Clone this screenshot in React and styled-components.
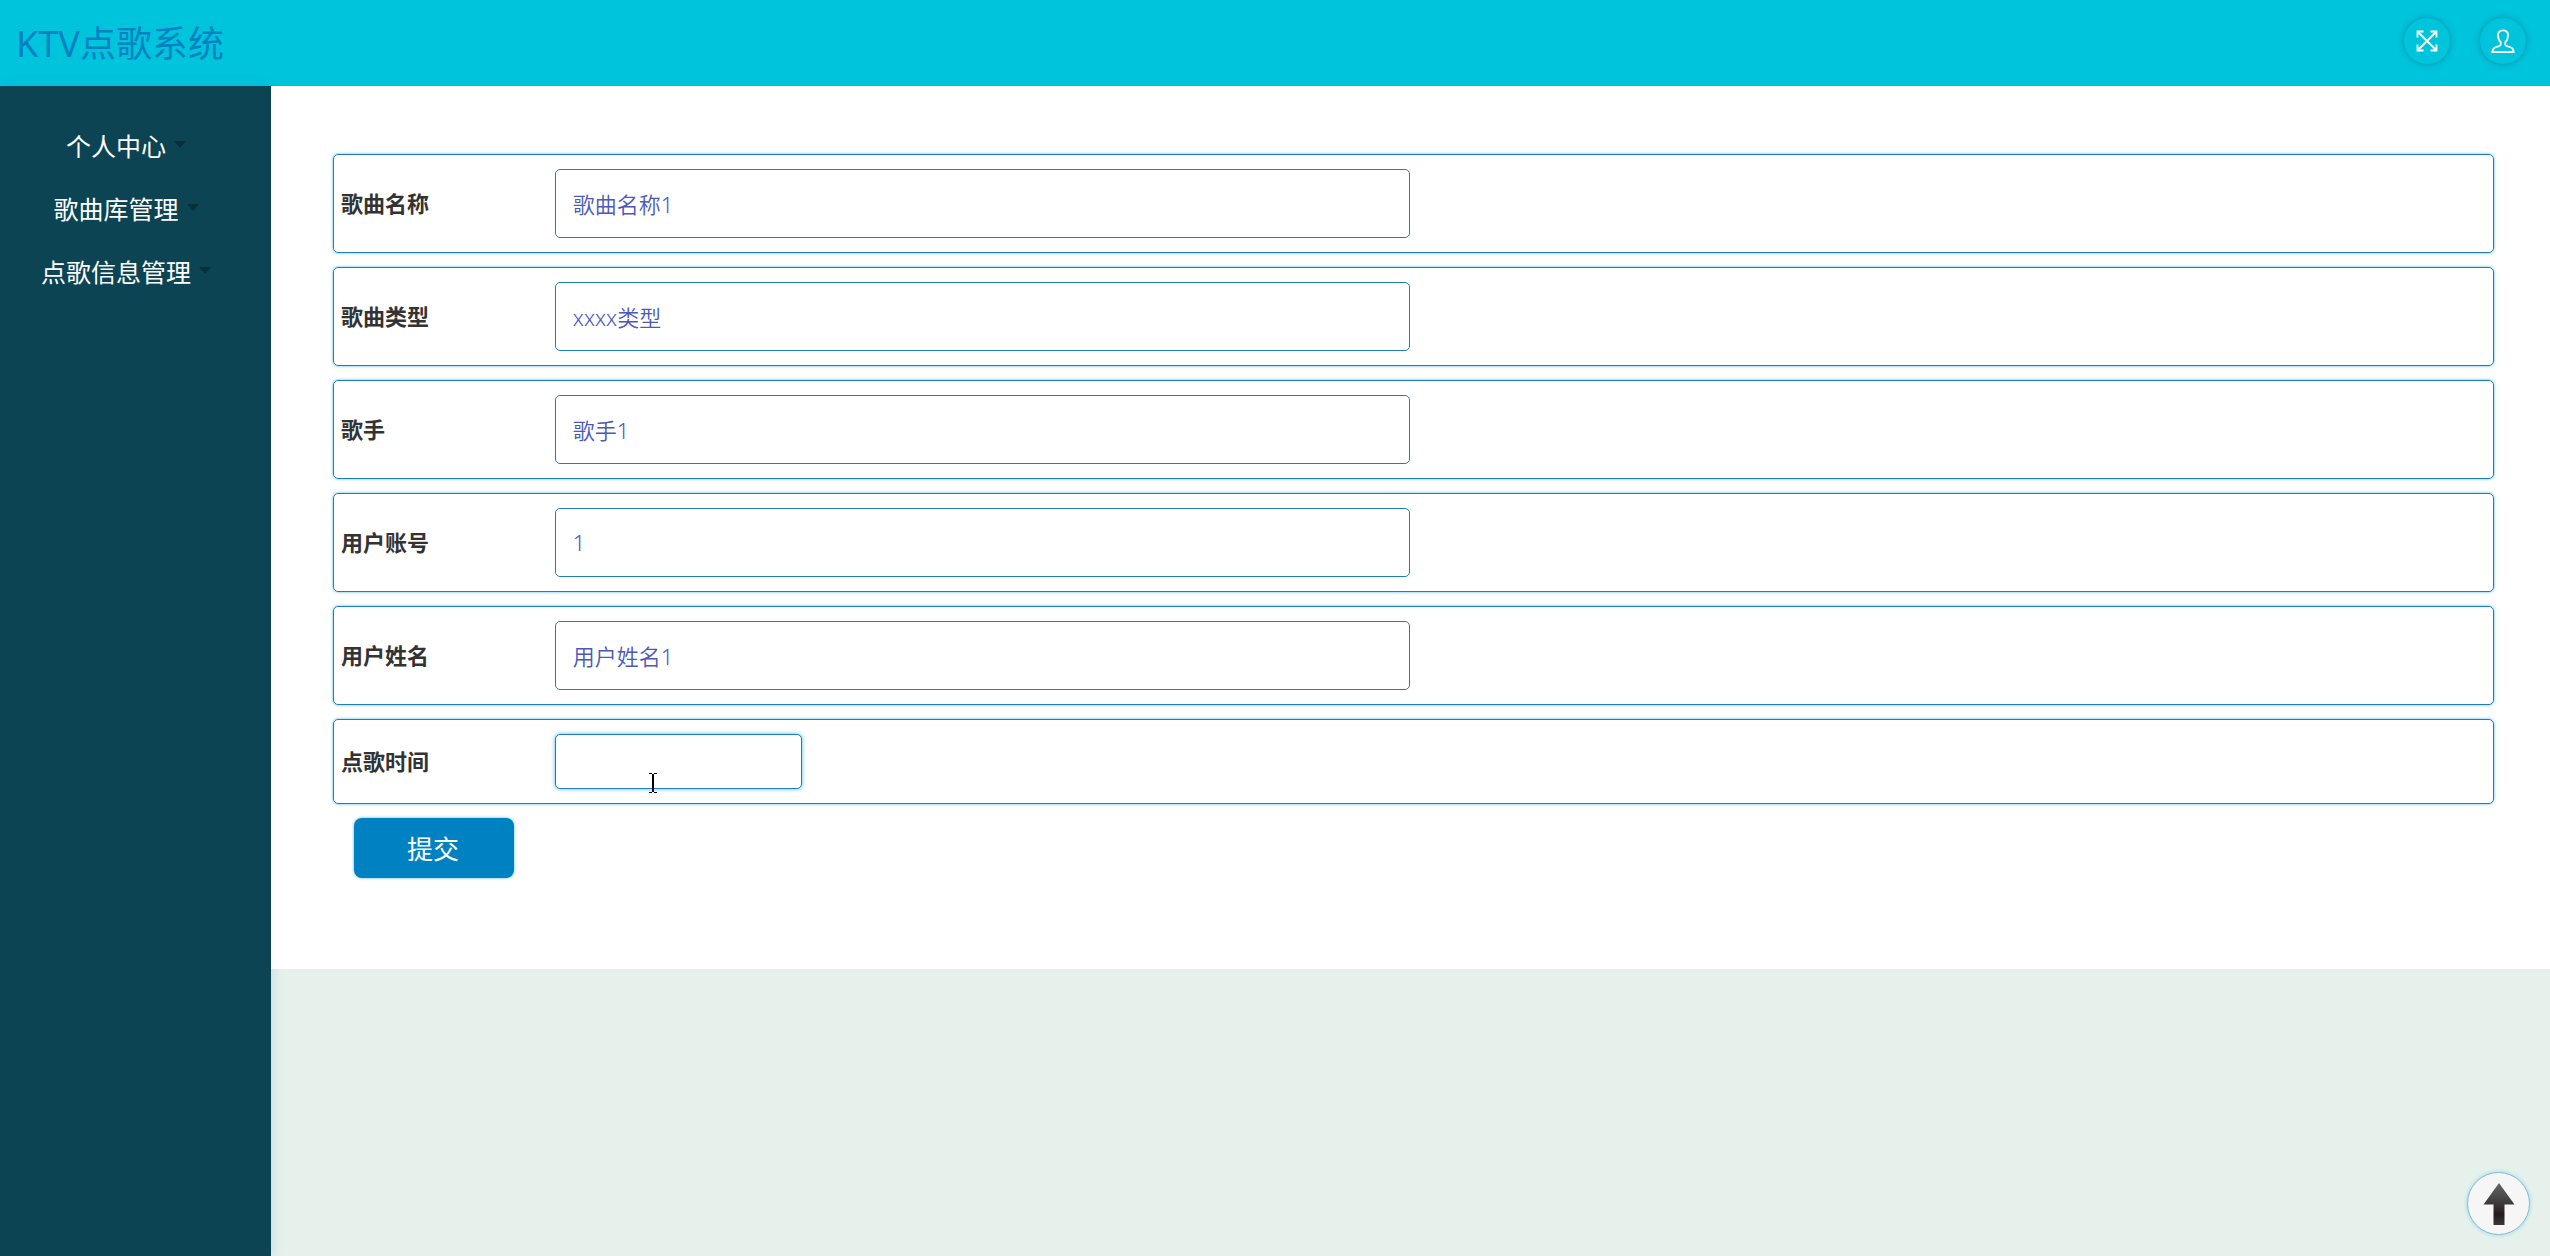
import styled, { createGlobalStyle } from 'styled-components';

const GlobalStyle = createGlobalStyle`
    * {
        box-sizing: border-box;
    }

    body {
        margin: 0;
        background: #e6f1eb;
        color: #333;
        font-family: "Noto Sans", "Noto Sans CJK SC", sans-serif;
    }

    button, input {
        font-family: inherit;
    }
`

const Page = styled.div`
    min-height: 100vh;
    display: flex;
    flex-direction: column;
`

const Header = styled.header`
    height: 86px;
    padding: 0 24px 0 16px;
    display: flex;
    align-items: center;
    justify-content: space-between;
    background: #00c4dc;
`

const Title = styled.h1`
    margin: 0;
    padding-top: 2px;
    font-size: 36px;
    line-height: 84px;
    font-weight: 400;
    color: #0081c2;
`

const HeaderActions = styled.div`
    display: flex;
    gap: 30px;
    padding-bottom: 4px;
`

const RoundButton = styled.button`
    width: 46px;
    height: 46px;
    padding: 0;
    display: flex;
    align-items: center;
    justify-content: center;
    border: 0;
    border-radius: 50%;
    background: transparent;
    color: #fff;
    box-shadow: 0 0 6px rgba(0, 70, 100, 0.4);
    cursor: pointer;
`

const Body = styled.div`
    flex: 1;
    display: flex;
    align-items: stretch;
`

const Sidebar = styled.nav`
    width: 271px;
    flex-shrink: 0;
    padding: 28px 19px 0 0;
    background: #0c4453;
    box-shadow: 0 0 12px rgba(0, 130, 200, 0.2);
`

const MenuItem = styled.a`
    height: 63px;
    padding-bottom: 2px;
    display: flex;
    align-items: center;
    justify-content: center;
    gap: 8px;
    color: #fff;
    font-size: 25px;
    text-decoration: none;

    &::after {
        content: "";
        border: 6px solid transparent;
        border-top: 7px solid #07303d;
        border-bottom: 0;
    }
`

const Main = styled.main`
    flex: 1;
`

const Form = styled.form`
    padding: 68px 56px 91px 62px;
    display: flex;
    flex-direction: column;
    gap: 14px;
    background: #fff;
`

const Row = styled.div`
    padding: 14px 14px 14px 7px;
    display: flex;
    align-items: center;
    border: 1px solid #1f7fb2;
    border-radius: 5px;
    box-shadow: 0 0 3px #4ab8ec;
`

const Label = styled.label`
    width: 10%;
    padding-bottom: 1px;
    font-size: 22px;
    line-height: 30px;
    font-weight: 700;
`

const TextInput = styled.input`
    width: 40%;
    height: 69px;
    padding: 0 17px 2px;
    border: 1px solid #1f7fb2;
    border-radius: 5px;
    background: #fff;
    color: #4d58b8;
    font-size: 22px;
    font-weight: 350;
    outline: none;
`

const TimeField = styled.div`
    position: relative;
    display: flex;
`

const TimeInput = styled(TextInput)`
    width: 247px;
    height: 55px;
    box-shadow: 0 0 4px #4ab8ec;
`

const Pointer = styled.svg`
    position: absolute;
    left: 94px;
    top: 39px;
    pointer-events: none;
`

const SubmitButton = styled.button`
    width: 160px;
    height: 60px;
    margin-left: 21px;
    padding: 0 2px 0 0;
    border: 0;
    border-radius: 8px;
    background: #0081c2;
    box-shadow: 0 0 3px #4ab8ec;
    color: #fff;
    font-size: 26px;
    cursor: pointer;
`

const TopButton = styled.button`
    position: fixed;
    right: 20px;
    bottom: 21px;
    width: 63px;
    height: 63px;
    padding: 0;
    display: flex;
    align-items: center;
    justify-content: center;
    border: 1px solid #7fbcd4;
    border-radius: 50%;
    background: #f6f6f7;
    box-shadow: 0 0 4px #9bd3e8;
    cursor: pointer;
`

const menus = ['个人中心', '歌曲库管理', '点歌信息管理'];

const fields = [
    { name: 'gequmingcheng', label: '歌曲名称', value: '歌曲名称1' },
    { name: 'gequleixing', label: '歌曲类型', value: 'xxxx类型' },
    { name: 'geshou', label: '歌手', value: '歌手1' },
    { name: 'yonghuzhanghao', label: '用户账号', value: '1' },
    { name: 'yonghuxingming', label: '用户姓名', value: '用户姓名1' },
];

const ExpandIcon = () => (
    <svg width="22" height="22" viewBox="0 0 22 22" fill="none" stroke="currentColor" strokeWidth="1.8">
        <path d="M1.5 1.5 20.5 20.5M20.5 1.5 1.5 20.5" />
        <path d="M1.5 7.5v-6h6M14.5 1.5h6v6M20.5 14.5v6h-6M7.5 20.5h-6v-6" />
    </svg>
)

const UserIcon = () => (
    <svg width="24" height="24" viewBox="0 0 24 24" fill="none" stroke="currentColor" strokeWidth="1.8" strokeLinejoin="round">
        <path d="M9.7 13.2C7.9 11.5 7 9 7 6.3 7 3 8.9 1.3 12 1.3s5 1.7 5 5c0 2.7-.9 5.2-2.7 6.9v2.2c0 .7.4 1.1 1.1 1.4l4.5 1.7c1.9.8 2.7 2 2.8 4.7H1.3c.1-2.7.9-3.9 2.8-4.7l4.5-1.7c.7-.3 1.1-.7 1.1-1.400z" />
    </svg>
)

const ArrowIcon = () => (
    <svg width="32" height="44" viewBox="0 0 32 44">
        <defs>
            <linearGradient id="arrow" x1="0" y1="0" x2="0" y2="1">
                <stop offset="0" stopColor="#666" />
                <stop offset="0.5" stopColor="#3c393a" />
                <stop offset="0.75" stopColor="#251a1c" />
                <stop offset="1" stopColor="#3c3839" />
            </linearGradient>
        </defs>
        <path d="M16 1 31.5 22.5H21.5V43H10.5V22.5H.5z" fill="url(#arrow)" />
    </svg>
)

const App = () => {
    return (
        <>
            <GlobalStyle />
            <Page>
                <Header>
                    <Title>KTV点歌系统</Title>
                    <HeaderActions>
                        <RoundButton type="button" aria-label="全屏">
                            <ExpandIcon />
                        </RoundButton>
                        <RoundButton type="button" aria-label="用户">
                            <UserIcon />
                        </RoundButton>
                    </HeaderActions>
                </Header>
                <Body>
                    <Sidebar>
                        {menus.map(menu => (
                            <MenuItem href="#" key={menu}>{menu}</MenuItem>
                        ))}
                    </Sidebar>
                    <Main>
                        <Form onSubmit={e => e.preventDefault()}>
                            {fields.map(({ name, label, value }) => (
                                <Row key={name}>
                                    <Label htmlFor={name}>{label}</Label>
                                    <TextInput id={name} name={name} defaultValue={value} />
                                </Row>
                            ))}
                            <Row>
                                <Label htmlFor="diangeshijian">点歌时间</Label>
                                <TimeField>
                                    <TimeInput id="diangeshijian" name="diangeshijian" />
                                    <Pointer width="8" height="20" viewBox="0 0 8 20" fill="none" stroke="#000">
                                        <path d="M0 .5h3M5 .5h3M0 19.5h3M5 19.5h3" />
                                        <path d="M4 1v18" strokeWidth="2" />
                                    </Pointer>
                                </TimeField>
                            </Row>
                            <SubmitButton type="submit">提交</SubmitButton>
                        </Form>
                    </Main>
                </Body>
            </Page>
            <TopButton type="button" aria-label="返回顶部">
                <ArrowIcon />
            </TopButton>
        </>
    );
}

export default App;
